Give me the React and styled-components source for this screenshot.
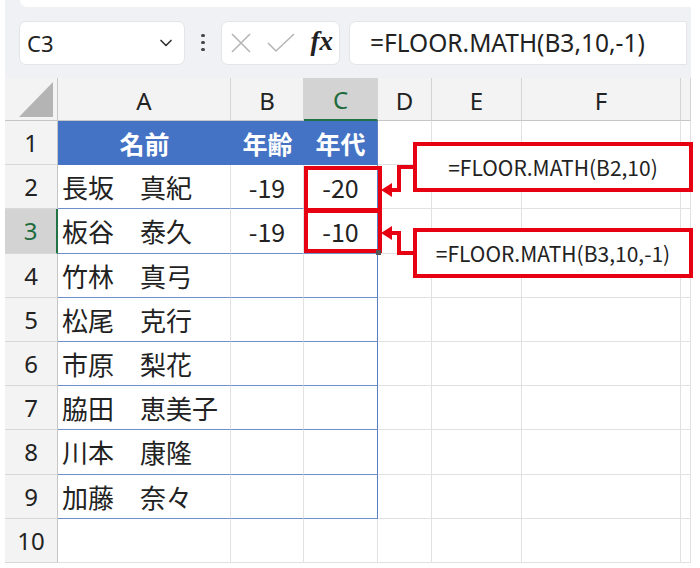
import React from 'react';
import styled, { createGlobalStyle } from 'styled-components';
import { ChevronDown } from 'lucide-react';

const Global = createGlobalStyle`
  html, body { margin: 0; padding: 0; background: #fff; }
  body { font-family: "Noto Sans", "Noto Sans CJK JP", sans-serif; color: #222; }
`;

const Frame = styled.div`
  width: 686px;
  margin-left: 5px;
`;

const TopArea = styled.div`
  background: #eff1f4;
`;

const RibbonEdge = styled.div`
  height: 7px;
  margin-left: 15px;
  background: #fff;
  border-bottom-left-radius: 10px;
`;

const Bar = styled.div`
  height: 71px;
  display: flex;
  align-items: center;
  padding: 0 0 0 14px;
  box-sizing: border-box;
`;

const Box = styled.div`
  height: 44px;
  box-sizing: border-box;
  background: #fff;
  border: 1px solid #e3e5e8;
  border-radius: 7px;
  display: flex;
  align-items: center;
`;

const NameBox = styled(Box)`
  width: 166px;
  padding: 0 8px 0 7px;
  justify-content: space-between;
  font-size: 22px;
  color: #222;
`;

const Kebab = styled.div`
  width: 36px;
  display: flex;
  flex-direction: column;
  align-items: center;
  gap: 3.5px;
  span {
    width: 3.5px;
    height: 3.5px;
    border-radius: 50%;
    background: #444;
  }
`;

const FxBox = styled(Box)`
  width: 119px;
  padding: 0 6px 0 8px;
  justify-content: space-between;
`;

const Fx = styled.span`
  font-family: "Liberation Serif", "DejaVu Serif", serif;
  font-style: italic;
  font-weight: bold;
  font-size: 27px;
  color: #222;
  line-height: 1;
  padding-bottom: 3px;
`;

const FormulaBox = styled(Box)`
  flex: 1;
  margin-left: 9px;
  margin-right: 4px;
  padding-left: 20px;
  font-size: 24.5px;
  color: #222;
  border-top-right-radius: 0;
  border-bottom-right-radius: 0;
`;

const Sheet = styled.div`
  position: relative;
  display: grid;
  grid-template-columns: 53px 173px 73px 74px 54px 90px 159px 10px;
  grid-template-rows: 43px repeat(10, 44.2px);
`;

const Corner = styled.div`
  background: #f3f3f3;
  border-right: 1px solid #c6c6c6;
  border-bottom: 1px solid #c6c6c6;
  box-sizing: border-box;
  padding: 4px 0 0 14px;
`;

const ColHead = styled.div`
  box-sizing: border-box;
  background: ${p => (p.$active ? '#d3d3d3' : '#f3f3f3')};
  color: ${p => (p.$active ? '#1d6b3c' : '#222')};
  border-right: 1px solid #d4d4d4;
  border-bottom: ${p => (p.$active ? '2px solid #217346' : '1px solid #c6c6c6')};
  display: flex;
  align-items: center;
  justify-content: center;
  font-size: 24px;
  padding-top: 2px;
`;

const RowHead = styled.div`
  box-sizing: border-box;
  background: ${p => (p.$active ? '#d3d3d3' : '#f3f3f3')};
  color: ${p => (p.$active ? '#1d6b3c' : '#222')};
  border-right: ${p => (p.$active ? '2px solid #217346' : '1px solid #c6c6c6')};
  border-bottom: 1px solid #d8d8d8;
  display: flex;
  align-items: center;
  justify-content: center;
  font-size: 24px;
`;

const Cell = styled.div`
  box-sizing: border-box;
  background: ${p => (p.$head ? '#4472c4' : '#fff')};
  color: ${p => (p.$head ? '#fff' : '#222')};
  font-weight: ${p => (p.$head ? 'bold' : 'normal')};
  font-family: "Noto Sans CJK JP", "Noto Sans", sans-serif;
  font-size: ${p => (p.$align === 'left' ? '26px' : '25px')};
  display: flex;
  align-items: center;
  justify-content: ${p => (p.$align === 'left' ? 'flex-start' : 'center')};
  padding-left: ${p => (p.$align === 'left' ? '4px' : '0')};
  white-space: pre;
  border-right: ${p => (p.$edge ? '1px solid #5b7fc2' : p.$head ? '0' : '1px solid #e1e1e1')};
  border-bottom: ${p => (p.$table ? '1px solid #6f8fca' : p.$head ? '0' : '1px solid #e1e1e1')};
`;

const RedBox = styled.div`
  position: absolute;
  left: ${p => p.$x}px;
  top: ${p => p.$y}px;
  width: ${p => p.$w}px;
  height: ${p => p.$h}px;
  box-sizing: border-box;
  border: 4px solid #e60012;
`;

const Callout = styled(RedBox)`
  background: #fff;
  display: flex;
  align-items: center;
  justify-content: center;
  font-family: "Noto Sans CJK JP", "Noto Sans", sans-serif;
  font-size: 21px;
  color: #222;
`;

const Handle = styled.div`
  position: absolute;
  left: 371px;
  top: 172px;
  width: 5px;
  height: 5px;
  background: #555;
`;

const Connectors = styled.svg`
  position: absolute;
  left: 0;
  top: 0;
  overflow: visible;
  pointer-events: none;
`;

const cols = ['A', 'B', 'C', 'D', 'E', 'F', ''];
const names = [
  '長坂　真紀',
  '板谷　泰久',
  '竹林　真弓',
  '松尾　克行',
  '市原　梨花',
  '脇田　恵美子',
  '川本　康隆',
  '加藤　奈々',
];
const ages = ['-19', '-19'];
const gens = ['-20', '-10'];

export default function App() {
  const rows = [];
  for (let r = 1; r <= 10; r++) {
    rows.push(
      <RowHead key={`h${r}`} $active={r === 3}>
        {r}
      </RowHead>
    );
    if (r === 1) {
      rows.push(<Cell key="a1" $head>名前</Cell>);
      rows.push(<Cell key="b1" $head>年齢</Cell>);
      rows.push(<Cell key="c1" $head $edge>年代</Cell>);
    } else if (r <= 9) {
      const i = r - 2;
      rows.push(<Cell key={`a${r}`} $table $align="left">{names[i]}</Cell>);
      rows.push(<Cell key={`b${r}`} $table>{ages[i] || ''}</Cell>);
      rows.push(<Cell key={`c${r}`} $table $edge>{gens[i] || ''}</Cell>);
    } else {
      rows.push(<Cell key="a10" />);
      rows.push(<Cell key="b10" />);
      rows.push(<Cell key="c10" />);
    }
    for (let c = 3; c < 7; c++) rows.push(<Cell key={`x${r}-${c}`} />);
  }

  return (
    <>
      <Global />
      <Frame>
        <TopArea>
          <RibbonEdge />
          <Bar>
            <NameBox>
              <span>C3</span>
              <ChevronDown size={20} strokeWidth={2} color="#333" />
            </NameBox>
            <Kebab>
              <span />
              <span />
              <span />
            </Kebab>
            <FxBox>
              <svg width="22" height="22" viewBox="0 0 22 22">
                <path d="M2 2 L20 20 M20 2 L2 20" stroke="#b5b5b5" strokeWidth="1.6" fill="none" />
              </svg>
              <svg width="28" height="22" viewBox="0 0 28 22">
                <path d="M1 11 L9 19 L27 2" stroke="#b5b5b5" strokeWidth="1.6" fill="none" />
              </svg>
              <Fx>fx</Fx>
            </FxBox>
            <FormulaBox>=FLOOR.MATH(B3,10,-1)</FormulaBox>
          </Bar>
        </TopArea>
        <Sheet>
          <Corner>
            <svg width="34" height="35" viewBox="0 0 34 35">
              <polygon points="34,0 34,35 0,35" fill="#b4b4b4" />
            </svg>
          </Corner>
          {cols.map((c, i) => (
            <ColHead key={i} $active={c === 'C'}>
              {c}
            </ColHead>
          ))}
          {rows}
          <RedBox $x={299} $y={88} $w={78} $h={46} />
          <RedBox $x={299} $y={131} $w={78} $h={44} />
          <Handle />
          <Connectors width="686" height="485">
            <path d="M408 89 H394 V112 H384" stroke="#e60012" strokeWidth="4" fill="none" />
            <polygon points="376,112 387,105 387,119" fill="#e60012" />
            <path d="M408 175 H394 V155 H384" stroke="#e60012" strokeWidth="4" fill="none" />
            <polygon points="376,155 387,148 387,162" fill="#e60012" />
          </Connectors>
          <Callout $x={408} $y={64} $w={280} $h={50}>=FLOOR.MATH(B2,10)</Callout>
          <Callout $x={408} $y={150} $w={280} $h={50}>=FLOOR.MATH(B3,10,-1)</Callout>
        </Sheet>
      </Frame>
    </>
  );
}
